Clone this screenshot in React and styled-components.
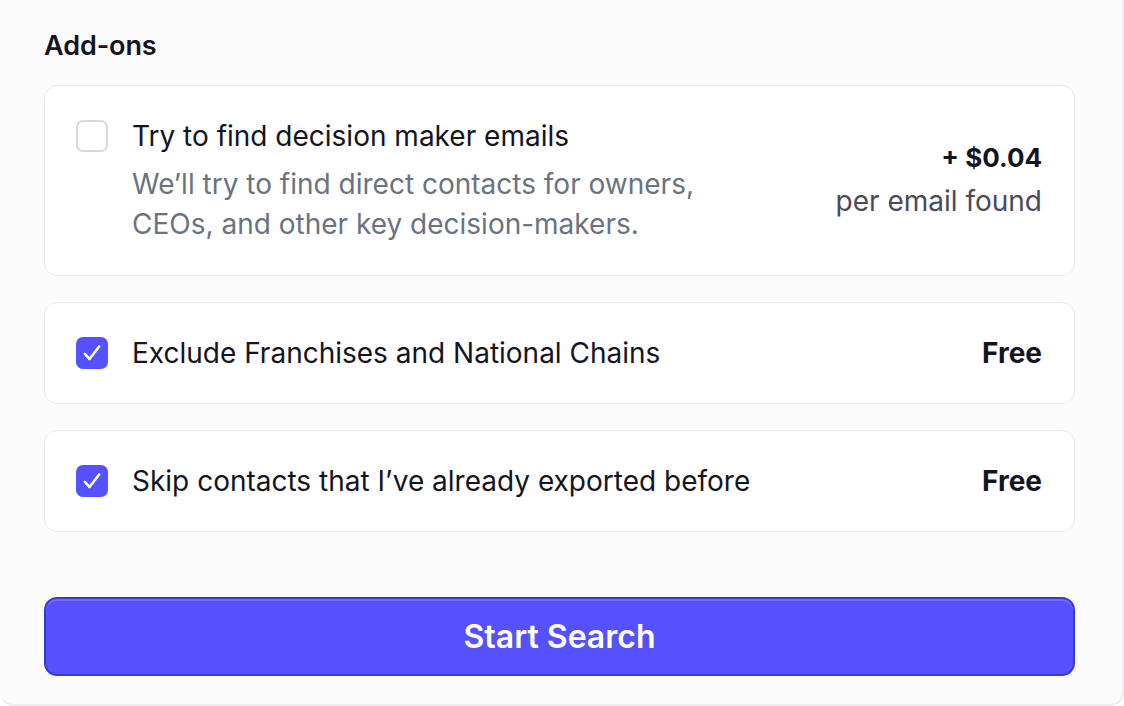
import React, {useState} from 'react';
import styled, {createGlobalStyle} from 'styled-components';

const GlobalStyle = createGlobalStyle`
  body {
    margin: 0;
    background: #ffffff;
    font-family: Inter, "Noto Sans", sans-serif;
    -webkit-font-smoothing: antialiased;
  }
`;

const PanelSt = styled.div`
  box-sizing: border-box;
  width: 1124px;
  height: 706px;
  background: #fbfbfc;
  border-right: 2px solid #ececf1;
  border-bottom: 2px solid #ececf1;
  border-bottom-right-radius: 14px;
  border-bottom-left-radius: 14px;
  padding: 28px 47px 0 44px;
  display: flex;
  flex-direction: column;
`;

const HeadingSt = styled.h2`
  margin: 0 0 21px;
  font-size: 27px;
  line-height: 36px;
  font-weight: 600;
  color: #14141f;
  letter-spacing: -0.1px;
`;

const ListSt = styled.div`
  display: flex;
  flex-direction: column;
  gap: 26px;
`;

// the tall card keeps its checkbox at the top, the short ones centre it
const CardSt = styled.label`
  display: flex;
  align-items: center;
  gap: 24px;
  background: #ffffff;
  border: 1px solid #e9e9ef;
  border-radius: 13px;
  padding: ${p => (p.$tall ? '31px 32px 31px 31px' : '31px 32px 31px 31px')};
  min-height: ${p => (p.$tall ? '0' : '100px')};
  box-sizing: border-box;
  cursor: pointer;
`;

const BoxSt = styled.span`
  flex: none;
  box-sizing: border-box;
  width: 32px;
  height: 32px;
  border-radius: 7px;
  align-self: ${p => (p.$top ? 'flex-start' : 'center')};
  margin-top: ${p => (p.$top ? '3px' : '0')};
  background: ${p => (p.$checked ? '#5551ff' : '#ffffff')};
  border: 2px solid ${p => (p.$checked ? '#5551ff' : '#d9d9e0')};
  display: flex;
  align-items: center;
  justify-content: center;
`;

const BodySt = styled.div`
  flex: 1;
  display: flex;
  flex-direction: column;
  gap: 9px;
`;

const TitleSt = styled.div`
  font-size: 28px;
  line-height: 38px;
  color: #14141f;
  font-weight: 400;
`;

const DescSt = styled.div`
  font-size: 28px;
  line-height: 40px;
  color: #6b7280;
  max-width: 580px;
`;

const PriceSt = styled.div`
  flex: none;
  text-align: right;
  display: flex;
  flex-direction: column;
  gap: 5px;
  margin-bottom: ${p => (p.$lift ? '3px' : '0')};
`;

const AmountSt = styled.div`
  font-size: ${p => (p.$small ? '26px' : '28px')};
  line-height: 38px;
  font-weight: 700;
  color: #14141f;
`;

const UnitSt = styled.div`
  font-size: 28px;
  line-height: 38px;
  color: #4a4a5a;
`;

const ButtonSt = styled.button`
  margin-top: 65px;
  height: 79px;
  width: 100%;
  border-radius: 13px;
  border: 2px solid #3c38d6;
  box-shadow: inset 0 2px 0 rgba(255, 255, 255, 0.18);
  background: #5551ff;
  color: #ffffff;
  font-family: Inter, "Noto Sans", sans-serif;
  font-size: 32px;
  font-weight: 600;
  cursor: pointer;
`;

const Check = () => (
  <svg width="22" height="22" viewBox="0 0 20 20" fill="none">
    <path
      d="M3.5 10.8l4.3 4.7L16.5 4"
      stroke="#ffffff"
      strokeWidth="2.3"
      strokeLinecap="round"
      strokeLinejoin="round"
    />
  </svg>
);

export default function App() {
  const [checked, setChecked] = useState({emails: false, chains: true, skip: true});
  const toggle = key => setChecked(c => ({...c, [key]: !c[key]}));

  return (
    <>
      <GlobalStyle />
      <PanelSt>
        <HeadingSt>Add-ons</HeadingSt>
        <ListSt>
          <CardSt $tall onClick={() => toggle('emails')}>
            <BoxSt $top $checked={checked.emails}>
              {checked.emails && <Check />}
            </BoxSt>
            <BodySt>
              <TitleSt>Try to find decision maker emails</TitleSt>
              <DescSt>
                We’ll try to find direct contacts for owners, CEOs, and other key
                decision-makers.
              </DescSt>
            </BodySt>
            <PriceSt $lift>
              <AmountSt $small>+ $0.04</AmountSt>
              <UnitSt>per email found</UnitSt>
            </PriceSt>
          </CardSt>
          <CardSt onClick={() => toggle('chains')}>
            <BoxSt $checked={checked.chains}>{checked.chains && <Check />}</BoxSt>
            <BodySt>
              <TitleSt>Exclude Franchises and National Chains</TitleSt>
            </BodySt>
            <PriceSt>
              <AmountSt>Free</AmountSt>
            </PriceSt>
          </CardSt>
          <CardSt onClick={() => toggle('skip')}>
            <BoxSt $checked={checked.skip}>{checked.skip && <Check />}</BoxSt>
            <BodySt>
              <TitleSt>Skip contacts that I’ve already exported before</TitleSt>
            </BodySt>
            <PriceSt>
              <AmountSt>Free</AmountSt>
            </PriceSt>
          </CardSt>
        </ListSt>
        <ButtonSt>Start Search</ButtonSt>
      </PanelSt>
    </>
  );
}
